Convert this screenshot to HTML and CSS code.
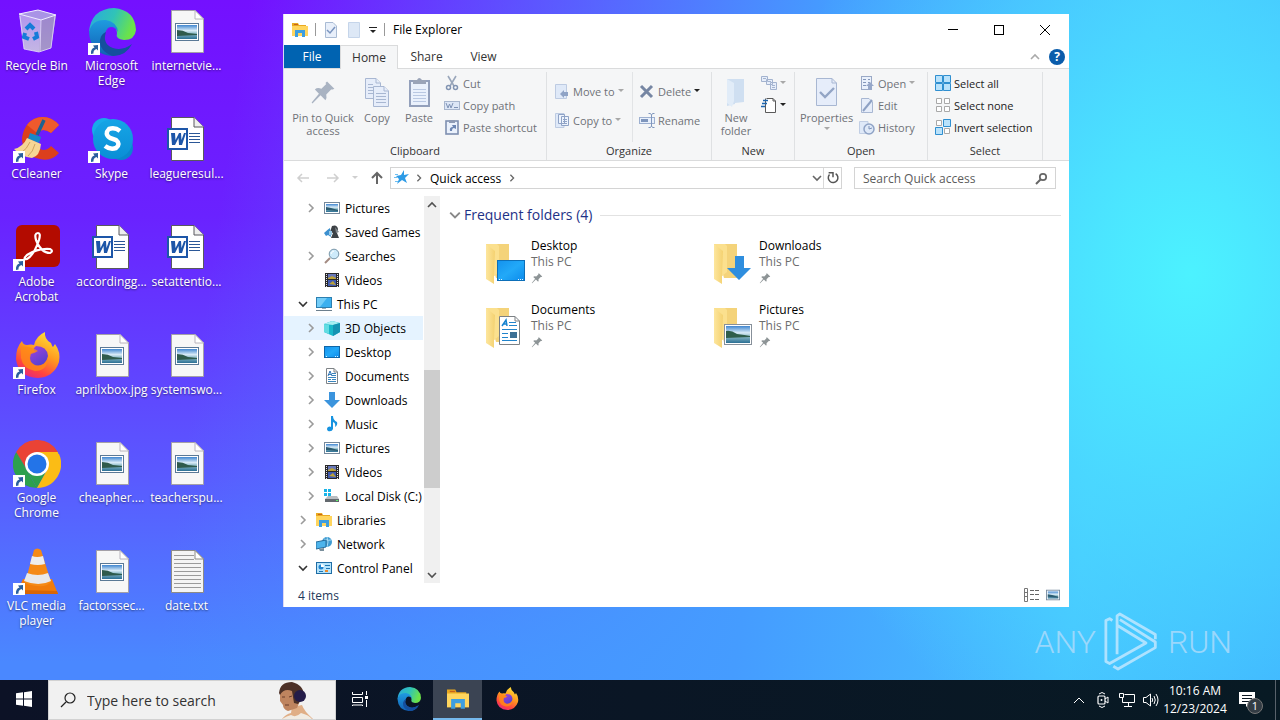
FILE: index.html
```html
<!DOCTYPE html>
<html lang="en">
<head>
<meta charset="utf-8">
<meta name="viewport" content="width=device-width, initial-scale=1">
<title>File Explorer</title>
<link rel="stylesheet" href="styles.css">
</head>
<body>
<svg class="sprite" aria-hidden="true">
  <defs>
    <linearGradient id="g-edge1" x1="0" y1="0" x2="1" y2="0.3"><stop offset="0" stop-color="#2aa7e0"/><stop offset=".55" stop-color="#30c3b8"/><stop offset="1" stop-color="#6be34a"/></linearGradient>
    <linearGradient id="g-edge2" x1="0" y1="0" x2="0" y2="1"><stop offset="0" stop-color="#1f9be0"/><stop offset="1" stop-color="#1160b4"/></linearGradient>
    <linearGradient id="g-fox" x1="0.8" y1="0" x2="0.3" y2="1"><stop offset="0" stop-color="#ffe53b"/><stop offset=".45" stop-color="#ff9a1f"/><stop offset=".8" stop-color="#ff4340"/><stop offset="1" stop-color="#e62a7a"/></linearGradient>
    <linearGradient id="g-foxc" x1="0" y1="0" x2="0.6" y2="1"><stop offset="0" stop-color="#a443dd"/><stop offset="1" stop-color="#5540d0"/></linearGradient>
    <linearGradient id="g-sky" x1="0" y1="0" x2="0" y2="1"><stop offset="0" stop-color="#3f86d0"/><stop offset=".4" stop-color="#d9ebf7"/><stop offset=".6" stop-color="#8fbcc8"/><stop offset="1" stop-color="#2a6f94"/></linearGradient>
    <linearGradient id="g-screen" x1="0" y1="0" x2="1" y2="1"><stop offset="0" stop-color="#1492ee"/><stop offset=".5" stop-color="#22a9f8"/><stop offset="1" stop-color="#0c8bec"/></linearGradient>
    <linearGradient id="g-skype" x1="0" y1="0" x2="0" y2="1"><stop offset="0" stop-color="#16a5e6"/><stop offset="1" stop-color="#0a8ed6"/></linearGradient>
    <linearGradient id="g-fold" x1="0" y1="0" x2="1" y2="0"><stop offset="0" stop-color="#fde69d"/><stop offset="1" stop-color="#f3cf6c"/></linearGradient>
    <linearGradient id="g-bin" x1="0" y1="0" x2="0" y2="1"><stop offset="0" stop-color="#b9a2ee"/><stop offset="1" stop-color="#cfcde0"/></linearGradient>
  </defs>

  <symbol id="i-shortcut" viewBox="0 0 12 12"><rect width="12" height="12" fill="#fff"/><path d="M3 11Q2.500 5.500 6.500 4.500L5 2.500L10 2V7.500L8.500 6Q5 7 5.500 10.500Z" fill="#2a5f9e"/></symbol>

  <symbol id="i-bin" viewBox="0 0 48 48">
    <path d="M6 6L25 2L43 7L38 40L26 44L11 41Z" fill="url(#g-bin)" opacity=".88"/>
    <path d="M28 12L43 7L38 40L26 44Z" fill="#8f7fb8" opacity=".6"/>
    <path d="M6 6L25 2L43 7L28 12Z" fill="#a993e6" stroke="#efeaff"/>
    <path d="M7 8L11 41L26 44L38 40L42 8M28 12L27 43" fill="none" stroke="#e4dcfa" stroke-width=".8"/>
    <path d="M13 21L17 17L21 21M23 24L24 29L20 31M16 31L11 29L12 25" fill="none" stroke="#167bd8" stroke-width="4"/>
  </symbol>
  <symbol id="i-edge" viewBox="0 0 48 48">
    <path d="M1 24Q3 1 26 0Q47 2 48 22Q47 32 36 32Q27 31 29 25Q29 17 21 16Q8 13 1 24Z" fill="url(#g-edge1)"/>
    <path d="M1 24Q4 11 18 12Q29 14 30 24Q26 17 20 20Q12 30 20 38Q29 46 43 37Q36 48 24 48Q2 46 1 24Z" fill="url(#g-edge2)"/>
    <path d="M18 24Q14 36 25 40Q35 43 44 36Q38 48 25 48Q11 43 12 32Q13 26 18 24Z" fill="#154f9e"/>
  </symbol>
  <symbol id="i-ccleaner" viewBox="0 0 48 48">
    <path d="M46 9L38 17Q28 10 23 20Q20 31 30 34Q35 34 38 30L46 37Q38 46 27 43Q9 40 9 22Q12 3 28 1Q38 0 46 9Z" fill="#dc3f1d"/>
    <path d="M46 9L38 17Q30 11 24 17L14 9Q20 1 30 1Q39 1 46 9Z" fill="#ee5a2d"/>
    <path d="M31 4L24 19" stroke="#1e6291" stroke-width="3.500"/>
    <path d="M17 17L28 21L26 27L15 23Z" fill="#1788c9"/>
    <path d="M14 22L28 28Q27 40 19 42Q8 41 1 33Q10 31 14 22Z" fill="#f6d695"/>
    <path d="M17 26Q14 33 8 37M22 28Q20 36 15 40" stroke="#cfa35f" fill="none"/>
  </symbol>
  <symbol id="i-skype" viewBox="0 0 48 48">
    <circle cx="16" cy="14" r="12" fill="#18abea"/><circle cx="33" cy="32" r="12" fill="#0a86ce"/><circle cx="25" cy="23" r="20" fill="url(#g-skype)"/>
    <path d="M32 15Q27 11 21 13Q16 18 22 22L28 24Q33 28 28 32Q22 34 17 30" fill="none" stroke="#fff" stroke-width="4.500"/>
  </symbol>
  <symbol id="i-acrobat" viewBox="0 0 48 48">
    <rect x="3" y="1" width="44" height="42" rx="6" fill="#b30b00"/>
    <path d="M25 9Q21 9 23 16Q28 29 37 29Q41 27 37 25Q25 24 14 31Q9 36 14 35Q21 31 26 16Q28 9 25 9Z" fill="none" stroke="#fff" stroke-width="2.200"/>
  </symbol>
  <symbol id="i-firefox" viewBox="0 0 48 48">
    <path d="M9 9Q10 13 14 13Q18 12 21 13Q23 4 32 0Q31 7 38 11Q39 14 40 15L42 12Q48 20 46 30Q41 45 25 46Q5 45 3 27Q3 15 9 9Z" fill="url(#g-fox)"/>
    <path d="M23 14Q34 14 35 24Q33 34 23 34Q15 31 17 22Q19 20 23 20Q18 18 23 14Z" fill="url(#g-foxc)"/>
    <path d="M8 15Q17 14 25 19Q22 21 18 22Q15 30 22 33Q30 35 35 27Q34 39 22 39Q10 37 8 26Z" fill="#ff8a16" opacity=".8"/>
  </symbol>
  <symbol id="i-chrome" viewBox="0 0 48 48">
    <path d="M3.200 12L13.600 30L24 48A24 24 0 0 1 3.200 12Z" fill="#2da04e"/><path d="M3.200 12L13.600 30L24 48L34 30Z" fill="#2da04e"/><path d="M34 30L24 48A24 24 0 0 0 46 14H30Z" fill="#fbbc15"/><path d="M3.200 12A24 24 0 0 1 44.800 12H24L13 28Z" fill="#ea4335"/><path d="M24 12H44.800L46 16H30Z" fill="#fbbc15"/>
    <circle cx="24" cy="24" r="12" fill="#fff"/><circle cx="24" cy="24" r="9.500" fill="#2374e8"/>
  </symbol>
  <symbol id="i-vlc" viewBox="0 0 48 48">
    <path d="M10 31H39L45 46H3Z" fill="#f07c0a"/><path d="M3 46L7 42L44 43L45 46Z" fill="#d96604"/>
    <path d="M21 2Q24 -1 28 2L38 34Q31 42 12 35Z" fill="#f58a16"/>
    <path d="M19 8Q24 10 30 8L32 16Q25 18 17 16Z" fill="#eee"/><path d="M14 25Q25 29 35 25L38 33Q26 39 11 33Z" fill="#e9e9e9"/>
  </symbol>
  <symbol id="i-imgfile" viewBox="0 0 48 48">
    <path d="M8.500 2.500H32L40.500 11V44.500H8.500Z" fill="#f7f7f7" stroke="#a4a0a8"/><path d="M32 2.500V11H40.500Z" fill="#fff" stroke="#b8b4bc"/>
    <rect x="12.500" y="15.500" width="23" height="17" fill="#fff" stroke="#5b7996"/><rect x="14" y="17" width="20" height="14" fill="url(#g-sky)"/><path d="M14 22Q20 22 25 25L34 26V27L14 28Z" fill="#2f5b4c"/>
  </symbol>
  <symbol id="i-word" viewBox="0 0 48 48">
    <path d="M8.500 1.500H31L40.500 11V44.500H8.500Z" fill="#fff" stroke="#59585f"/><path d="M31 1.500V11H40.500" fill="#eee" stroke="#59585f"/>
    <path d="M26 17.500H37M26 20.500H37M26 23.500H37M26 26.500H37" stroke="#2b5797"/>
    <rect x="5" y="13" width="19" height="20" fill="#fff" stroke="#1d56a8" stroke-width="2"/>
    <path d="M8 17H12L12.500 24L16 17H18L18.500 24L21 17H23L19 29H16L15.500 22L12 29H9Z" fill="#1d56a8"/>
  </symbol>
  <symbol id="i-txt" viewBox="0 0 48 48">
    <path d="M8.500 2.500H32L40.500 11V44.500H8.500Z" fill="#f4f4f4" stroke="#8d8b86"/><path d="M32 2.500V11H40.500Z" fill="#fff" stroke="#8d8b86"/>
    <path d="M11 7.500H31M11 11.500H31M11 15.500H38M11 19.500H38M11 23.500H38M11 27.500H38M11 31.500H38M11 35.500H38M11 39.500H38" stroke="#9a9a9a"/>
  </symbol>

  <symbol id="i-explorer" viewBox="0 0 16 16">
    <path d="M0 1H6L7 3H14V5H16V14H0Z" fill="#e9a920"/><path d="M0 4H16V14H0Z" fill="#ffd55e"/><path d="M3 15V8H13V15H10V11H6V15Z" fill="#3d9ee0"/><path d="M2 2H6V3H2Z" fill="#c7631b"/>
  </symbol>
  <symbol id="i-pic" viewBox="0 0 16 16"><rect x=".5" y="2.500" width="15" height="11" fill="#fff" stroke="#74889c"/><rect x="2" y="4" width="12" height="8" fill="url(#g-sky)"/><path d="M2 7L7 8L14 10V11L2 10Z" fill="#2b5b70"/></symbol>
  <symbol id="i-games" viewBox="0 0 16 16"><path d="M8 2Q13 0 14 5L13 9L15 14H7L9 9L6 8Z" fill="#3c4145"/><path d="M11 3L15 8L12 9Z" fill="#80878c"/><path d="M0 9Q3 6 6 4L7 13L4 11L2 12Z" fill="#3c90cf"/><path d="M5 7H8V11H5Z" fill="#9bcbe8"/></symbol>
  <symbol id="i-search" viewBox="0 0 16 16"><path d="M6 10L1 15" stroke="#a38b82" stroke-width="2"/><circle cx="10" cy="6" r="4.800" fill="#cdeafa" stroke="#7795a8"/><path d="M7 6Q8 3 10 3" stroke="#fff" fill="none"/></symbol>
  <symbol id="i-video" viewBox="0 0 16 16"><rect x="1" y="1" width="14" height="14" fill="#29292c"/><path d="M2.500 2V15M13.500 2V15" stroke="#e8e8e8" stroke-dasharray="1 1"/><rect x="4" y="2" width="8" height="5" fill="#6878b8"/><rect x="4" y="8" width="8" height="6" fill="#405bb2"/><path d="M4 6L8 4L12 6V7H4ZM5 12L9 9L12 13Z" fill="#bba23a"/></symbol>
  <symbol id="i-pc" viewBox="0 0 16 16"><rect x=".5" y="1.500" width="15" height="10" fill="#3cb0ef" stroke="#2c7fb0"/><path d="M1 2H11L4 11H1Z" fill="#74cdf8"/><path d="M0 14.500H16" stroke="#6c7f8d"/><path d="M6 12H10V13H6Z" fill="#9cadb8"/></symbol>
  <symbol id="i-3d" viewBox="0 0 16 16"><path d="M0 4L8 1L16 3V12L9 16L0 12Z" fill="#19b8c9"/><path d="M0 4L8 1L16 3L9 5Z" fill="#a7eff2"/><path d="M9 5L16 3V12L9 16Z" fill="#1593b2"/><path d="M0 4L5 5V14L0 12Z" fill="#62dce2"/></symbol>
  <symbol id="i-desktop" viewBox="0 0 16 16"><rect x=".5" y="2.500" width="15" height="11" fill="url(#g-screen)" stroke="#0e66a8"/><path d="M2 12.500H4M11 12.500H15" stroke="#d9f1ff" stroke-dasharray="1 1"/></symbol>
  <symbol id="i-doc" viewBox="0 0 16 16"><path d="M2.500 .500H10L13.500 4V15.500H2.500Z" fill="#fff" stroke="#7e8387"/><path d="M10 .500V4H13.500" fill="none" stroke="#7e8387"/><path d="M4 6.500H7M8 5.500H12M8 7.500H12M4 9.500H12M4 11.500H7M8 11.500H12M4 13.500H12" stroke="#3a85bd"/><path d="M4 8L6 3L8 8" fill="none" stroke="#2d72b5"/></symbol>
  <symbol id="i-down" viewBox="0 0 16 16"><path d="M5 0H11V8H16L8 16L0 8H5Z" fill="#3b94dd"/></symbol>
  <symbol id="i-music" viewBox="0 0 16 16"><path d="M7 0H9Q9 4 13 6Q14 9 11 11Q12 7 9 6V13Q8 16 4 15Q2 13 4 11Q6 10 7 11Z" fill="#1793e0"/></symbol>
  <symbol id="i-disk" viewBox="0 0 16 16"><path d="M0 1H3V4H0ZM4 1H7V4H4ZM0 5H3V8H0ZM4 5H7V8H4Z" fill="#18b4e8"/><path d="M4 8H13L15 11H1Z" fill="#b9bdc1"/><path d="M1 11H15V14H1Z" fill="#63696e"/><path d="M12 12H14V13H12Z" fill="#5ff06a"/></symbol>
  <symbol id="i-network" viewBox="0 0 16 16"><circle cx="11" cy="6" r="5" fill="#3f9bd2"/><path d="M8 3Q12 5 15 4M11 1Q13 6 11 11" stroke="#a5dbf4" fill="none"/><path d="M0 6L10 4V11L0 13Z" fill="#4db4ec" stroke="#276c9c"/><path d="M3 13L8 12V15H4Z" fill="#7a8f9c"/></symbol>
  <symbol id="i-panel" viewBox="0 0 16 16"><rect x=".5" y="2.500" width="15" height="11" fill="#b5e3fb" stroke="#1f6da5"/><circle cx="5" cy="7" r="2.500" fill="#2185d0"/><path d="M5 4V7H8Q8 4 5 4Z" fill="#fff"/><path d="M9 5.500H14M10 8.500H14M3 11.500H7" stroke="#1e77b4"/><path d="M9 10H12V12H9Z" fill="#ee8a28"/></symbol>
  <symbol id="i-chev" viewBox="0 0 10 10"><path d="M3 1L7 5L3 9" fill="none" stroke="currentColor" stroke-width="1.600"/></symbol>
  <symbol id="i-chevd" viewBox="0 0 10 10"><path d="M1 3L5 7L9 3" fill="none" stroke="currentColor" stroke-width="1.600"/></symbol>
  <symbol id="i-chevu" viewBox="0 0 10 10"><path d="M1 7L5 3L9 7" fill="none" stroke="currentColor" stroke-width="1.600"/></symbol>
  <symbol id="i-drop" viewBox="0 0 6 4"><path d="M0 0H6L3 3Z" fill="currentColor"/></symbol>
  <symbol id="i-pin" viewBox="0 0 32 32"><path d="M21 3L30 12L28 13L26 13L20 19Q21 23 19 26L13 20L3 30L2 29L11 18L6 13Q9 10 14 12L20 6L19 5Z" fill="currentColor"/></symbol>

  <symbol id="i-copy" viewBox="0 0 32 32"><g fill="#e6edfa" stroke="#a8b7d2"><path d="M4.500 2.500H15L19.500 7V22.500H4.500Z"/><path d="M12.500 10.500H23L27.500 15V30.500H12.500Z"/><path d="M15 2.500V7H19.500M23 10.500V15H27.500M7 8.500H12M7 11.500H12M7 14.500H12M7 17.500H12M15 17.500H25M15 20.500H25M15 23.500H25M15 26.500H25"/></g></symbol>
  <symbol id="i-paste" viewBox="0 0 32 32"><rect x="7" y="5" width="19" height="25" fill="#eaf1fc" stroke="#93a0bb" stroke-width="2"/><path d="M10 4H14Q16 0 19 4H23V8H10Z" fill="#9aa4b8"/><path d="M10 13.500H23M10 16.500H23M10 19.500H23M10 22.500H23M10 25.500H23" stroke="#b9c8e2"/></symbol>
  <symbol id="i-cut" viewBox="0 0 16 16"><path d="M4 1L10 11M12 1L6 11" stroke="#9aa7bb" stroke-width="1.600"/><circle cx="4.500" cy="12.500" r="2" fill="none" stroke="#8294b2" stroke-width="1.500"/><circle cx="11.500" cy="12.500" r="2" fill="none" stroke="#8294b2" stroke-width="1.500"/></symbol>
  <symbol id="i-path" viewBox="0 0 16 16"><rect x=".5" y="4.500" width="15" height="8" fill="#dce6f6" stroke="#a7b5cd"/><path d="M2 6L4 11L5.500 7L7 11L9 6M10 10.500H14" fill="none" stroke="#7e92b5"/></symbol>
  <symbol id="i-pshort" viewBox="0 0 16 16"><rect x="2" y="2" width="12" height="13" fill="#eaf1fc" stroke="#7e8fb0" stroke-width="1.600"/><path d="M5 1H11V4H5Z" fill="#8e9bb4"/><path d="M6 12Q5 8 9 8L8 6L12 6V10L10 9Q8 9 8 12Z" fill="#6c86b3"/></symbol>
  <symbol id="i-move" viewBox="0 0 16 16"><path d="M1.500 1.500H12.500V15.500H1.500Z" fill="#dfe9f8" stroke="#bdcbe2"/><path d="M6 11L10 7V9H14V13H10V15Z" fill="#8fa3c6"/></symbol>
  <symbol id="i-copyto" viewBox="0 0 16 16"><path d="M1.500 1.500H10V15.500H1.500Z" fill="#dfe9f8" stroke="#bdcbe2"/><path d="M4.500 2.500H10.500V11.500H4.500ZM7.500 4.500H14.500V13.500H7.500Z" fill="#eef4fd" stroke="#8fa3c6"/><path d="M9 7.500H13M9 9.500H13M9 11.500H13" stroke="#8fa3c6"/></symbol>
  <symbol id="i-delete" viewBox="0 0 16 16"><path d="M2 3L13 14M13 3L2 14" stroke="#7686a3" stroke-width="3"/></symbol>
  <symbol id="i-rename" viewBox="0 0 16 16"><rect x=".5" y="5.500" width="15" height="6" fill="#e8f0fc" stroke="#9db0d0"/><path d="M2 7H9V10H2Z" fill="#7f96bd"/><path d="M9.500 1.500H11.500L12.500 3L13.500 1.500H15.500M12.500 3V14M9.500 15.500H11.500L12.500 14L13.500 15.500H15.500" fill="none" stroke="#7f96bd"/></symbol>
  <symbol id="i-newfolder" viewBox="0 0 32 32"><path d="M7 3H24V26L15 27V28L7 30Z" fill="#cfdff1"/><path d="M7 3L14 7V25L12 31L7 27Z" fill="#e1ecf8"/></symbol>
  <symbol id="i-newitem" viewBox="0 0 16 16"><path d="M.500 1.500H6.500V6.500H.500ZM5.500 4.500H11.500V9.500H5.500ZM9.500 7.500H15.500V14.500H9.500Z" fill="#e7eefa" stroke="#a3b3cf"/><path d="M2 3.500H5M7 6.500H10M11 10.500H14M11 12.500H14" stroke="#a3b3cf"/></symbol>
  <symbol id="i-easy" viewBox="0 0 16 16"><path d="M5.500 1.500H12L14.500 4V15.500H4.500V1.500" fill="#fff" stroke="#5a5a5a"/><path d="M12 1.500V4H14.500" fill="none" stroke="#5a5a5a"/><path d="M2 3.500H7M1 6.500H6M0 9.500H4" stroke="#1c66b0" stroke-width="1.500"/></symbol>
  <symbol id="i-props" viewBox="0 0 32 32"><path d="M5.500 2.500H21L25.500 7V29.500H5.500Z" fill="#e6edfa" stroke="#a8b7d2"/><path d="M21 2.500V7H25.500" fill="none" stroke="#a8b7d2"/><path d="M9 16L14 21L23 12" fill="none" stroke="#93a5c5" stroke-width="2.400"/></symbol>
  <symbol id="i-open" viewBox="0 0 16 16"><rect x="2.500" y="1.500" width="10" height="13" fill="#eaf1fc" stroke="#9aa9c6"/><path d="M4 4.500H7M4 7.500H7M4 10.500H7M9 4.500H11M9 7.500H11" stroke="#8497bb"/><path d="M9 15V11H7L11 7L15 11H13V15Z" fill="#97a8c9"/></symbol>
  <symbol id="i-edit" viewBox="0 0 16 16"><path d="M2.500 1.500H10L13.500 5V15.500H2.500Z" fill="#e6edfa" stroke="#a8b7d2"/><path d="M4 14L13 3" stroke="#8ea1c4" stroke-width="2"/></symbol>
  <symbol id="i-history" viewBox="0 0 16 16"><path d="M.500 2.500H9V14.500H.500Z" fill="#dfe9f8" stroke="#c1cee4"/><circle cx="10" cy="10" r="5" fill="#dfe9f8" stroke="#8fa3c6" stroke-width="1.500"/><path d="M10 7V10L13 9" fill="none" stroke="#7d92b9"/></symbol>
  <symbol id="i-selall" viewBox="0 0 16 16"><path d="M.500 .500H7.500V7.500H.500ZM8.500 .500H15.500V7.500H8.500ZM.500 8.500H7.500V15.500H.500ZM8.500 8.500H15.500V15.500H8.500Z" fill="#b9e2fb" stroke="#2f8fd0"/></symbol>
  <symbol id="i-selnone" viewBox="0 0 16 16"><path d="M1.500 1.500H6.500V6.500H1.500ZM9.500 1.500H14.500V6.500H9.500ZM1.500 9.500H6.500V14.500H1.500ZM9.500 9.500H14.500V14.500H9.500Z" fill="#fff" stroke="#a9a9a9"/></symbol>
  <symbol id="i-selinv" viewBox="0 0 16 16"><path d="M1.500 1.500H6.500V6.500H1.500ZM9.500 9.500H14.500V14.500H9.500Z" fill="#fff" stroke="#a9a9a9"/><path d="M8.500 .500H15.500V7.500H8.500ZM.500 8.500H7.500V15.500H.500Z" fill="#b9e2fb" stroke="#2f8fd0"/></symbol>
  <symbol id="i-checkdoc" viewBox="0 0 16 16"><path d="M2.500 .500H10L13.500 4V15.500H2.500Z" fill="#e8effa" stroke="#a9bbd4"/><path d="M4 8L7 11L12 5" fill="none" stroke="#7a94bf" stroke-width="1.500"/></symbol>
  <symbol id="i-blankdoc" viewBox="0 0 16 16"><path d="M2.500 .500H13.500V15.500H2.500Z" fill="#dde8f6" stroke="#c5d5ea"/></symbol>
  <symbol id="i-qat" viewBox="0 0 8 8"><path d="M0 1.500H8" stroke="#222"/><path d="M1 4H7L4 7Z" fill="#222"/></symbol>
  <symbol id="i-left" viewBox="0 0 16 16"><path d="M14 8H3M7 4L3 8L7 12" fill="none" stroke="currentColor" stroke-width="1.500"/></symbol>
  <symbol id="i-right" viewBox="0 0 16 16"><path d="M2 8H13M9 4L13 8L9 12" fill="none" stroke="currentColor" stroke-width="1.500"/></symbol>
  <symbol id="i-up" viewBox="0 0 16 16"><path d="M8 14V3M3 8L8 3L13 8" fill="none" stroke="currentColor" stroke-width="2"/></symbol>
  <symbol id="i-star" viewBox="0 0 16 16"><path d="M10 0L10 5L15 4L11 8L13 13L8 10L3 14L5 9L2 6L7 5Z" fill="#2d9be6"/><path d="M1 4.500H4M0 7.500H3M1 11.500H4" stroke="#6fbff2"/></symbol>
  <symbol id="i-refresh" viewBox="0 0 16 16"><path d="M11 3A5.500 5.500 0 1 1 4 4" fill="none" stroke="#555" stroke-width="1.700"/><path d="M3 2H8V7" fill="none" stroke="#555" stroke-width="1.700"/></symbol>
  <symbol id="i-mag" viewBox="0 0 16 16"><circle cx="10" cy="7" r="3.200" fill="none" stroke="currentColor" stroke-width="1.700"/><path d="M8 9L3 14" stroke="currentColor" stroke-width="2"/></symbol>

  <symbol id="i-folder" viewBox="0 0 48 48"><path d="M3 6H26V40H13Z" fill="#f4d37a"/><path d="M3 6L13 11V36L11 38V46L3 41Z" fill="url(#g-fold)"/><path d="M3 6H14L16 8V34L11 38L12 13Z" fill="#fbe08e"/></symbol>
  <symbol id="i-f-desktop" viewBox="0 0 48 48"><use href="#i-folder" width="48" height="48"/><rect x="14.500" y="22.500" width="27" height="20" fill="url(#g-screen)" stroke="#0d6fb8"/><path d="M16 41.500H19M35 41.500H41" stroke="#e5f6ff" stroke-dasharray="1 1"/></symbol>
  <symbol id="i-f-downloads" viewBox="0 0 48 48"><use href="#i-folder" width="48" height="48"/><path d="M24 18H33V30H40L28 42L16 30H24Z" fill="#2f8ede"/></symbol>
  <symbol id="i-f-documents" viewBox="0 0 48 48"><use href="#i-folder" width="48" height="48"/><path d="M16.500 14.500H32L36.500 19V42.500H16.500Z" fill="#fff" stroke="#7c8185"/><path d="M32 14.500V19H36.500" fill="none" stroke="#7c8185"/><path d="M19 24L23 18L24 24M20 22H24" fill="none" stroke="#1683d0" stroke-width="1.500"/><path d="M26 20.500H33M26 23.500H34M19 27.500H34M19 31.500H25M19 35.500H25M19 38.500H34" stroke="#2184cc"/><rect x="27" y="30" width="7" height="6" fill="#3c7095"/></symbol>
  <symbol id="i-f-pictures" viewBox="0 0 48 48"><use href="#i-folder" width="48" height="48"/><rect x="13.500" y="22.500" width="27" height="20" fill="#fff" stroke="#87909a"/><rect x="15" y="24" width="24" height="17" fill="url(#g-sky)"/><path d="M15 29Q20 28 26 32Q34 33 39 34V35L15 36Z" fill="#2f5e4b"/></symbol>

  <symbol id="i-person" viewBox="0 0 40 38"><path d="M5 38Q9 33 14 32L15 26L25 24Q27 30 36 38Z" fill="#e0ae86"/><path d="M5 38Q10 35 14 34Q19 37 24 32Q32 34 35 38Z" fill="#f1ebe2"/><path d="M3 13Q2 3 13 2Q25 3 25 15L20 27L11 30Q6 28 6 24L3 20Z" fill="#bf845f"/><path d="M2 12Q3 1 15 1Q27 4 27 15L21 23L17 22L15 10Q7 7 3 14Z" fill="#4c3027"/><ellipse cx="23" cy="15" rx="6" ry="6" fill="#241c49"/><path d="M5 16H8M8 24H12M12 16L15 15" stroke="#6a3c2c"/></symbol>
  <symbol id="i-logo" viewBox="0 0 60 62"><path d="M9 8L6 6L2 8V52L6 54L45 32L14 13V44M14 13V3L17 1L55 23V28M10 57L15 60L55 37V31L17 7" fill="none" stroke="#c7e9ff" stroke-width="3" stroke-linejoin="round"/></symbol>
  <symbol id="i-win" viewBox="0 0 16 16"><path d="M0 2.300L7 1.300V7.500H0ZM8 1.200L16 0V7.500H8ZM0 8.500H7V14.700L0 13.700ZM8 8.500H16V16L8 14.800Z" fill="#fff"/></symbol>
  <symbol id="i-taskview" viewBox="0 0 16 16"><path d="M.500 1V3.500H10.500V1M.500 6.500H10.500V11.500H.500ZM.500 15V14H10.500V15M14.500 0V4M14.500 9V16" fill="none" stroke="#fff"/><path d="M13 5H16V8H13Z" fill="#fff"/></symbol>
  <symbol id="i-cam" viewBox="0 0 16 16"><path d="M4 2Q7 -1 10 2M4 14Q7 17 10 14" fill="none" stroke="#fff"/><rect x="3" y="4" width="7" height="8" rx="1" fill="none" stroke="#fff" stroke-width="1.200"/><path d="M10 7L13 5V11L10 9" fill="none" stroke="#fff"/><circle cx="6.500" cy="8" r="1" fill="#fff"/></symbol>
  <symbol id="i-net" viewBox="0 0 16 16"><path d="M5.500 2.500H15.500V10.500H3.500V6M9.500 11V14M5 14.500H13M.500 1.500H4.500V5.500H.500Z" fill="none" stroke="#fff"/></symbol>
  <symbol id="i-vol" viewBox="0 0 16 16"><path d="M.500 5.500H3L7.500 2V14L3 10.500H.500ZM9 6Q10.500 8 9 10M11 4Q13.500 8 11 12M13 2Q17 8 13 14" fill="none" stroke="#fff"/></symbol>
  <symbol id="i-note" viewBox="0 0 16 16"><path d="M0 0H16V12H10L7 15V12H0Z" fill="#fff"/><path d="M3 3.500H13M3 6.500H13M3 9.500H10" stroke="#0b1722"/></symbol>
  <symbol id="i-details" viewBox="0 0 16 16"><path d="M1.500 1.500H4.500V14.500H1.500ZM1.500 5.500H4.500M1.500 9.500H4.500" fill="#fff" stroke="#777"/><path d="M7 3.500H16M7 7.500H16M7 12.500H16" stroke="#666" stroke-dasharray="4 1"/></symbol>
</svg>

<main class="desktop">
  <ul class="shortcuts">
    <li><a href="#bin" class="shortcut"><span class="pic"><svg><use href="#i-bin"/></svg></span><span class="name">Recycle Bin</span></a></li>
    <li><a href="#ccleaner" class="shortcut"><span class="pic"><svg><use href="#i-ccleaner"/></svg><svg class="arrow"><use href="#i-shortcut"/></svg></span><span class="name">CCleaner</span></a></li>
    <li><a href="#acrobat" class="shortcut"><span class="pic"><svg><use href="#i-acrobat"/></svg><svg class="arrow"><use href="#i-shortcut"/></svg></span><span class="name">Adobe Acrobat</span></a></li>
    <li><a href="#firefox" class="shortcut"><span class="pic"><svg><use href="#i-firefox"/></svg><svg class="arrow"><use href="#i-shortcut"/></svg></span><span class="name">Firefox</span></a></li>
    <li><a href="#chrome" class="shortcut"><span class="pic"><svg><use href="#i-chrome"/></svg><svg class="arrow"><use href="#i-shortcut"/></svg></span><span class="name">Google Chrome</span></a></li>
    <li><a href="#vlc" class="shortcut"><span class="pic"><svg><use href="#i-vlc"/></svg><svg class="arrow"><use href="#i-shortcut"/></svg></span><span class="name">VLC media player</span></a></li>
    <li><a href="#edge" class="shortcut"><span class="pic"><svg><use href="#i-edge"/></svg><svg class="arrow"><use href="#i-shortcut"/></svg></span><span class="name">Microsoft Edge</span></a></li>
    <li><a href="#skype" class="shortcut"><span class="pic"><svg><use href="#i-skype"/></svg><svg class="arrow"><use href="#i-shortcut"/></svg></span><span class="name">Skype</span></a></li>
    <li><a href="#f1" class="shortcut"><span class="pic"><svg><use href="#i-word"/></svg></span><span class="name">accordingg...</span></a></li>
    <li><a href="#f2" class="shortcut"><span class="pic"><svg><use href="#i-imgfile"/></svg></span><span class="name">aprilxbox.jpg</span></a></li>
    <li><a href="#f3" class="shortcut"><span class="pic"><svg><use href="#i-imgfile"/></svg></span><span class="name">cheapher....</span></a></li>
    <li><a href="#f4" class="shortcut"><span class="pic"><svg><use href="#i-imgfile"/></svg></span><span class="name">factorssec...</span></a></li>
    <li><a href="#f5" class="shortcut"><span class="pic"><svg><use href="#i-imgfile"/></svg></span><span class="name">internetvie...</span></a></li>
    <li><a href="#f6" class="shortcut"><span class="pic"><svg><use href="#i-word"/></svg></span><span class="name">leagueresul...</span></a></li>
    <li><a href="#f7" class="shortcut"><span class="pic"><svg><use href="#i-word"/></svg></span><span class="name">setattentio...</span></a></li>
    <li><a href="#f8" class="shortcut"><span class="pic"><svg><use href="#i-imgfile"/></svg></span><span class="name">systemswo...</span></a></li>
    <li><a href="#f9" class="shortcut"><span class="pic"><svg><use href="#i-imgfile"/></svg></span><span class="name">teacherspu...</span></a></li>
    <li><a href="#f10" class="shortcut"><span class="pic"><svg><use href="#i-txt"/></svg></span><span class="name">date.txt</span></a></li>
  </ul>

  <section class="window" aria-label="File Explorer">
    <header class="titlebar">
      <svg class="ic16"><use href="#i-explorer"/></svg>
      <span class="tick"></span>
      <button class="qat" aria-label="Properties"><svg class="ic16"><use href="#i-checkdoc"/></svg></button>
      <button class="qat" aria-label="New folder"><svg class="ic16"><use href="#i-blankdoc"/></svg></button>
      <button class="qat" aria-label="Customize toolbar"><svg class="ic8"><use href="#i-qat"/></svg></button>
      <span class="tick"></span>
      <h1 class="title">File Explorer</h1>
      <div class="controls">
        <button aria-label="Minimize"><svg class="ic12" viewBox="0 0 12 12"><path d="M1 5.500H11" stroke="#000"/></svg></button>
        <button aria-label="Maximize"><svg class="ic12" viewBox="0 0 12 12"><rect x="1.500" y="1.500" width="9" height="9" fill="none" stroke="#000"/></svg></button>
        <button aria-label="Close"><svg class="ic12" viewBox="0 0 12 12"><path d="M1 1L11 11M11 1L1 11" stroke="#000"/></svg></button>
      </div>
    </header>

    <div class="tabs">
      <button class="tab file">File</button>
      <button class="tab active">Home</button>
      <button class="tab">Share</button>
      <button class="tab">View</button>
      <div class="tabs-end">
        <button class="mini" aria-label="Collapse ribbon"><svg class="ic10 pale"><use href="#i-chevu"/></svg></button>
        <button class="help" aria-label="Help">?</button>
      </div>
    </div>

    <div class="ribbon">
      <section class="group g-clip">
        <div class="tools">
          <button class="big wide" disabled><svg class="ic32 pinblue"><use href="#i-pin"/></svg>Pin to Quick access</button>
          <button class="big" disabled><svg class="ic32"><use href="#i-copy"/></svg>Copy</button>
          <button class="big" disabled><svg class="ic32"><use href="#i-paste"/></svg>Paste</button>
          <div class="stack">
            <button class="small" disabled><svg class="ic16"><use href="#i-cut"/></svg>Cut</button>
            <button class="small" disabled><svg class="ic16"><use href="#i-path"/></svg>Copy path</button>
            <button class="small" disabled><svg class="ic16"><use href="#i-pshort"/></svg>Paste shortcut</button>
          </div>
        </div>
        <h2 class="caption">Clipboard</h2>
      </section>
      <section class="group g-org">
        <div class="tools">
          <div class="stack airy">
            <button class="small" disabled><svg class="ic16"><use href="#i-move"/></svg>Move to<svg class="drop"><use href="#i-drop"/></svg></button>
            <button class="small" disabled><svg class="ic16"><use href="#i-copyto"/></svg>Copy to<svg class="drop"><use href="#i-drop"/></svg></button>
          </div>
          <div class="stack airy ruled">
            <button class="small" disabled><svg class="ic16"><use href="#i-delete"/></svg>Delete<svg class="drop dark"><use href="#i-drop"/></svg></button>
            <button class="small" disabled><svg class="ic16"><use href="#i-rename"/></svg>Rename</button>
          </div>
        </div>
        <h2 class="caption">Organize</h2>
      </section>
      <section class="group g-new">
        <div class="tools">
          <button class="big" disabled><svg class="ic32"><use href="#i-newfolder"/></svg>New folder</button>
          <div class="stack">
            <button class="small" disabled aria-label="New item"><svg class="ic16"><use href="#i-newitem"/></svg><svg class="drop"><use href="#i-drop"/></svg></button>
            <button class="small" aria-label="Easy access"><svg class="ic16"><use href="#i-easy"/></svg><svg class="drop dark"><use href="#i-drop"/></svg></button>
          </div>
        </div>
        <h2 class="caption">New</h2>
      </section>
      <section class="group g-open">
        <div class="tools">
          <button class="big" disabled><svg class="ic32"><use href="#i-props"/></svg>Properties<svg class="drop"><use href="#i-drop"/></svg></button>
          <div class="stack">
            <button class="small" disabled><svg class="ic16"><use href="#i-open"/></svg>Open<svg class="drop"><use href="#i-drop"/></svg></button>
            <button class="small" disabled><svg class="ic16"><use href="#i-edit"/></svg>Edit</button>
            <button class="small" disabled><svg class="ic16"><use href="#i-history"/></svg>History</button>
          </div>
        </div>
        <h2 class="caption">Open</h2>
      </section>
      <section class="group g-sel">
        <div class="tools">
          <div class="stack">
            <button class="small"><svg class="ic16"><use href="#i-selall"/></svg>Select all</button>
            <button class="small"><svg class="ic16"><use href="#i-selnone"/></svg>Select none</button>
            <button class="small"><svg class="ic16"><use href="#i-selinv"/></svg>Invert selection</button>
          </div>
        </div>
        <h2 class="caption">Select</h2>
      </section>
    </div>

    <div class="addressrow">
      <div class="history">
        <button class="mini faint" aria-label="Back"><svg class="ic16"><use href="#i-left"/></svg></button>
        <button class="mini faint" aria-label="Forward"><svg class="ic16"><use href="#i-right"/></svg></button>
        <button class="mini faint recent" aria-label="Recent"><svg class="drop"><use href="#i-drop"/></svg></button>
        <button class="mini mid" aria-label="Up"><svg class="ic16"><use href="#i-up"/></svg></button>
      </div>
      <div class="address">
        <svg class="ic16"><use href="#i-star"/></svg>
        <svg class="ic8 mid"><use href="#i-chev"/></svg>
        <span>Quick access</span>
        <svg class="ic8 mid"><use href="#i-chev"/></svg>
        <button class="mini mid expand" aria-label="Previous locations"><svg class="ic10"><use href="#i-chevd"/></svg></button>
        <button class="refresh" aria-label="Refresh"><svg class="ic14"><use href="#i-refresh"/></svg></button>
      </div>
      <label class="find"><input type="text" placeholder="Search Quick access" aria-label="Search Quick access"><svg class="ic16 mid"><use href="#i-mag"/></svg></label>
    </div>

    <div class="body">
      <nav class="tree" aria-label="Folders">
        <a href="#t1" class="node sub"><svg class="ic10"><use href="#i-chev"/></svg><svg class="ic16"><use href="#i-pic"/></svg>Pictures</a>
        <a href="#t2" class="node sub"><span class="ic10"></span><svg class="ic16"><use href="#i-games"/></svg>Saved Games</a>
        <a href="#t3" class="node sub"><svg class="ic10"><use href="#i-chev"/></svg><svg class="ic16"><use href="#i-search"/></svg>Searches</a>
        <a href="#t4" class="node sub"><span class="ic10"></span><svg class="ic16"><use href="#i-video"/></svg>Videos</a>
        <a href="#t5" class="node"><svg class="ic10 dark"><use href="#i-chevd"/></svg><svg class="ic16"><use href="#i-pc"/></svg>This PC</a>
        <a href="#t6" class="node sub hover"><svg class="ic10"><use href="#i-chev"/></svg><svg class="ic16"><use href="#i-3d"/></svg>3D Objects</a>
        <a href="#t7" class="node sub"><svg class="ic10"><use href="#i-chev"/></svg><svg class="ic16"><use href="#i-desktop"/></svg>Desktop</a>
        <a href="#t8" class="node sub"><svg class="ic10"><use href="#i-chev"/></svg><svg class="ic16"><use href="#i-doc"/></svg>Documents</a>
        <a href="#t9" class="node sub"><svg class="ic10"><use href="#i-chev"/></svg><svg class="ic16"><use href="#i-down"/></svg>Downloads</a>
        <a href="#t10" class="node sub"><svg class="ic10"><use href="#i-chev"/></svg><svg class="ic16"><use href="#i-music"/></svg>Music</a>
        <a href="#t11" class="node sub"><svg class="ic10"><use href="#i-chev"/></svg><svg class="ic16"><use href="#i-pic"/></svg>Pictures</a>
        <a href="#t12" class="node sub"><svg class="ic10"><use href="#i-chev"/></svg><svg class="ic16"><use href="#i-video"/></svg>Videos</a>
        <a href="#t13" class="node sub"><svg class="ic10"><use href="#i-chev"/></svg><svg class="ic16"><use href="#i-disk"/></svg>Local Disk (C:)</a>
        <a href="#t14" class="node"><svg class="ic10"><use href="#i-chev"/></svg><svg class="ic16"><use href="#i-explorer"/></svg>Libraries</a>
        <a href="#t15" class="node"><svg class="ic10"><use href="#i-chev"/></svg><svg class="ic16"><use href="#i-network"/></svg>Network</a>
        <a href="#t16" class="node"><svg class="ic10 dark"><use href="#i-chevd"/></svg><svg class="ic16"><use href="#i-panel"/></svg>Control Panel</a>
      </nav>
      <div class="scroll">
        <button class="mini" aria-label="Scroll up"><svg class="ic10"><use href="#i-chevu"/></svg></button>
        <div class="track"><div class="thumb"></div></div>
        <button class="mini" aria-label="Scroll down"><svg class="ic10"><use href="#i-chevd"/></svg></button>
      </div>
      <section class="content">
        <h2 class="heading"><svg class="ic12"><use href="#i-chevd"/></svg>Frequent folders (4)</h2>
        <div class="folders">
          <a href="#d1" class="folder"><svg class="ic48"><use href="#i-f-desktop"/></svg><span class="meta"><b>Desktop</b><span>This PC</span><svg class="ic12"><use href="#i-pin"/></svg></span></a>
          <a href="#d2" class="folder"><svg class="ic48"><use href="#i-f-downloads"/></svg><span class="meta"><b>Downloads</b><span>This PC</span><svg class="ic12"><use href="#i-pin"/></svg></span></a>
          <a href="#d3" class="folder"><svg class="ic48"><use href="#i-f-documents"/></svg><span class="meta"><b>Documents</b><span>This PC</span><svg class="ic12"><use href="#i-pin"/></svg></span></a>
          <a href="#d4" class="folder"><svg class="ic48"><use href="#i-f-pictures"/></svg><span class="meta"><b>Pictures</b><span>This PC</span><svg class="ic12"><use href="#i-pin"/></svg></span></a>
        </div>
      </section>
    </div>

    <footer class="status">
      <span>4 items</span>
      <div class="views">
        <button class="mini" aria-label="Details view"><svg class="ic16"><use href="#i-details"/></svg></button>
        <button class="mini" aria-label="Large icons view"><svg class="ic14"><use href="#i-pic"/></svg></button>
      </div>
    </footer>
  </section>

  <div class="watermark"><span>ANY</span><svg class="mark"><use href="#i-logo"/></svg><span>RUN</span></div>
</main>

<footer class="taskbar">
  <button class="task" aria-label="Start"><svg class="ic16"><use href="#i-win"/></svg></button>
  <label class="tasksearch"><svg class="lens" viewBox="0 0 16 16"><circle cx="10" cy="6" r="5" fill="none" stroke="#222" stroke-width="1.200"/><path d="M6 10L1 15" stroke="#222" stroke-width="1.200"/></svg><input type="text" placeholder="Type here to search" aria-label="Type here to search"><svg class="person"><use href="#i-person"/></svg></label>
  <button class="task" aria-label="Task view"><svg class="ic16"><use href="#i-taskview"/></svg></button>
  <button class="task" aria-label="Edge"><svg class="ic24"><use href="#i-edge"/></svg></button>
  <button class="task on" aria-label="File Explorer"><svg class="ic22"><use href="#i-explorer"/></svg></button>
  <button class="task" aria-label="Firefox"><svg class="ic24"><use href="#i-firefox"/></svg></button>
  <div class="tray">
    <button class="mini" aria-label="Hidden icons"><svg class="ic12" viewBox="0 0 12 12"><path d="M1 9L6 4L11 9" fill="none" stroke="#fff"/></svg></button>
    <button class="mini" aria-label="Meet now"><svg class="ic16"><use href="#i-cam"/></svg></button>
    <button class="mini" aria-label="Network"><svg class="ic16"><use href="#i-net"/></svg></button>
    <button class="mini" aria-label="Volume"><svg class="ic16"><use href="#i-vol"/></svg></button>
    <div class="clock"><span>10:16 AM</span><span>12/23/2024</span></div>
    <button class="mini notes" aria-label="Notifications"><svg class="ic16"><use href="#i-note"/></svg><span class="badge">1</span></button>
    <button class="peek" aria-label="Show desktop"></button>
  </div>
</footer>
</body>
</html>
```
FILE: styles.css
```css
* { box-sizing: border-box; }
body {
  margin: 0;
  height: 100vh;
  display: flex;
  flex-direction: column;
  overflow: hidden;
  font: 11px/15px "Open Sans", "Noto Sans", sans-serif;
  color: #000;
  background:
    radial-gradient(ellipse 34% 70% at 93% 38%, #4cf2ff 0%, rgba(76, 226, 255, .7) 45%, rgba(72, 200, 255, 0) 100%),
    linear-gradient(98deg, rgba(72, 150, 255, 0) 18%, #459cff 60%, #46c0ff 84%, #3fb0ff 100%),
    linear-gradient(#7410ff 0%, #6a22ff 30%, #5a58ff 65%, #4a88ff 92%);
}
h1, h2, ul { margin: 0; padding: 0; font: inherit; list-style: none; }
button { margin: 0; padding: 0; border: 0; background: none; font: inherit; color: inherit; }
input { font: inherit; border: 0; outline: 0; background: none; padding: 0; min-width: 0; flex: 1; color: #555; }
input::placeholder { color: #5c5c5c; opacity: 1; }
a { color: inherit; text-decoration: none; }
svg { display: block; flex: none; }
.sprite { position: absolute; width: 0; height: 0; }
.ic8 { width: 8px; height: 8px; }
.ic10 { width: 10px; height: 10px; }
.ic12 { width: 12px; height: 12px; }
.ic14 { width: 14px; height: 14px; }
.ic16 { width: 16px; height: 16px; }
.ic22 { width: 22px; height: 22px; }
.ic24 { width: 24px; height: 24px; }
.ic32 { width: 32px; height: 32px; }
.ic48 { width: 48px; height: 48px; }
.drop { width: 6px; height: 4px; color: #a8a8a8; }
.drop.dark { color: #222; }
.mini { display: flex; align-items: center; justify-content: center; }
.faint, .faint .drop { color: #cfcfcf; }
.mid { color: #666; }
.pale { color: #aaa; }

.desktop { flex: 1; position: relative; min-height: 0; }
.shortcuts {
  display: grid;
  grid-auto-flow: column;
  grid-template-rows: repeat(6, 108px);
  grid-auto-columns: 75px;
  width: max-content;
  padding-top: 8px;
}
.shortcut { display: flex; flex-direction: column; align-items: center; gap: 2px; padding-right: 2px; color: #fff; text-align: center; font-size: 12px; }
.pic { position: relative; }
.pic > svg { width: 48px; height: 48px; }
.pic > .arrow { position: absolute; left: 0; bottom: 1px; width: 12px; height: 12px; }
.name { text-shadow: 0 1px 2px rgba(0, 0, 0, .5); }

.window {
  position: absolute;
  top: 14px;
  bottom: 73px;
  left: 283px;
  right: 211px;
  display: flex;
  flex-direction: column;
  background: #fff;
  border-left: 1px solid #dcd8f4;
}
.titlebar { height: 31px; display: flex; align-items: center; padding-left: 8px; gap: 7px; }
.tick { width: 1px; height: 13px; background: #999; }
.title { font-size: 12px; margin-left: 1px; }
.controls { margin-left: auto; display: flex; padding-right: 1px; }
.controls button { width: 46px; height: 30px; display: flex; align-items: center; justify-content: center; }

.tabs { height: 24px; display: flex; font-size: 12px; color: #333; border-bottom: 1px solid #dadbdc; }
.tab { width: 57px; height: 23px; }
.tab.file { background: #0063b1; color: #fff; width: 56px; }
.tab.active { height: 24px; width: 58px; background: #f5f6f7; border: 1px solid #dadbdc; border-bottom: 0; }
.tabs-end { margin-left: auto; display: flex; align-items: center; gap: 9px; padding-right: 4px; }
.help { width: 16px; height: 16px; border-radius: 50%; background: #0a5cab; color: #fff; font-weight: 700; font-size: 12px; }

.ribbon { height: 92px; display: flex; background: #f5f6f7; border-bottom: 1px solid #dadbdc; color: #6f7277; }
.group { display: flex; flex-direction: column; margin: 3px 0 0; border-right: 1px solid #dfe1e3; }
.tools { flex: 1; display: flex; }
.caption { text-align: center; color: #333; line-height: 18px; }
.g-clip { width: 263px; }
.g-org { width: 165px; }
.g-new { width: 83px; }
.g-open { width: 133px; }
.g-sel { width: 115px; }
.g-clip .tools { padding-left: 6px; }
.g-new .tools, .g-open .tools { padding-left: 3px; }
.g-org .tools, .g-sel .tools { padding-left: 7px; }
.big { width: 42px; display: flex; flex-direction: column; align-items: center; line-height: 13px; padding-top: 4px; gap: 3px; color: inherit; }
.big.wide { width: 66px; }
.g-open .big { width: 57px; }
.pinblue { color: #a9b3c2; padding: 3px; }
.stack { display: flex; flex-direction: column; }
.big + .stack { margin-left: 4px; }
.small { height: 22px; display: flex; align-items: center; gap: 3px; color: inherit; white-space: nowrap; }
.stack.airy { padding-top: 8px; gap: 7px; width: 78px; }
.ruled { border-left: 1px solid #e2e4e6; padding-left: 6px; }
.g-sel .small { color: #222; }

.addressrow { height: 34px; display: flex; align-items: center; padding: 0 13px 0 11px; }
.history { width: 95px; display: flex; gap: 14px; }
.recent { margin: 0 -3px; }
.address { flex: 1; height: 22px; display: flex; align-items: center; gap: 7px; border: 1px solid #d4d4d4; padding-left: 3px; font-size: 12px; }
.address > .ic8:nth-child(2) { margin-left: -2px; }
.expand { margin-left: auto; }
.refresh { width: 18px; height: 20px; display: flex; align-items: center; justify-content: center; border-left: 1px solid #d9d9d9; margin-left: -6px; }
.find { width: 202px; height: 22px; margin-left: 12px; display: flex; align-items: center; border: 1px solid #d4d4d4; padding: 0 6px 0 8px; font-size: 12px; }

.body { flex: 1; min-height: 0; display: flex; margin-top: 1px; }
.tree { width: 139px; overflow: hidden; font-size: 12px; }
.node { height: 24px; display: flex; align-items: center; gap: 5px; padding-left: 14px; white-space: nowrap; }
.node .ic10 { color: #9b9b9b; margin-right: 3px; }
.node .dark { color: #333; }
.node.sub { padding-left: 22px; }
.node.hover { background: #e5f3ff; }
.scroll { width: 16px; margin-left: 1px; background: #f0f0f0; display: flex; flex-direction: column; color: #505050; }
.scroll .mini { height: 17px; }
.track { flex: 1; display: flex; flex-direction: column; justify-content: flex-end; padding-bottom: 78px; }
.thumb { height: 43%; background: #cdcdcd; }
.content { flex: 1; padding: 8px 8px 0 9px; }
.heading { display: flex; align-items: center; gap: 3px; font-size: 14px; line-height: 22px; color: #1e3287; }
.heading svg { color: #888; }
.heading::after { content: ""; flex: 1; height: 1px; background: #e2e2e2; margin-left: 5px; }
.folders { display: grid; grid-template-columns: repeat(auto-fill, 228px); grid-auto-rows: 64px; padding: 12px 0 0 34px; }
.folder { display: flex; }
.meta { display: flex; flex-direction: column; line-height: 16px; font-size: 12px; color: #6d6d6d; }
.meta b { font-weight: 400; color: #000; }
.meta svg { color: #8d9496; margin-top: 2px; }
.status { height: 24px; display: flex; align-items: center; justify-content: space-between; padding: 0 9px 0 14px; font-size: 12px; color: #1e395b; }
.views { display: flex; gap: 7px; }

.watermark { position: absolute; right: 48px; bottom: 8px; display: flex; align-items: center; gap: 8px; font: 300 32px/48px Roboto, sans-serif; color: #b0dcfb; opacity: .8; }
.mark { width: 56px; height: 60px; }

.taskbar { height: 40px; flex: none; display: flex; background: linear-gradient(90deg, #0c1226, #081a24); color: #fff; font-size: 12px; }
.task { width: 49px; display: flex; align-items: center; justify-content: center; border-bottom: 2px solid transparent; }
.task:first-child, .tasksearch + .task { width: 48px; }
.task.on { background: #3b4453; border-bottom-color: #76b9ed; }
.tasksearch { width: 288px; display: flex; align-items: center; background: #f1f1f1; border: 1px solid #d2d2d2; padding-left: 11px; gap: 11px; font-size: 14px; }
.tasksearch input { line-height: 20px; height: 22px; }
.tasksearch input::placeholder { color: #333; }
.lens { width: 16px; height: 16px; }
.person { width: 40px; height: 38px; margin-right: 18px; }
.tray { margin-left: auto; display: flex; align-items: center; gap: 8px; }
.tray .mini { width: 16px; }
.clock { display: flex; flex-direction: column; text-align: center; line-height: 18px; width: 64px; margin-left: -4px; }
.tray .notes { position: relative; margin: 0 12px 0 4px; }
.badge { position: absolute; left: 8px; top: 6px; width: 16px; height: 16px; border: 1px solid #777; border-radius: 50%; background: #333c44; font-size: 11px; line-height: 14px; text-align: center; }
.peek { width: 5px; height: 40px; border-left: 1px solid #58626b; }
```
